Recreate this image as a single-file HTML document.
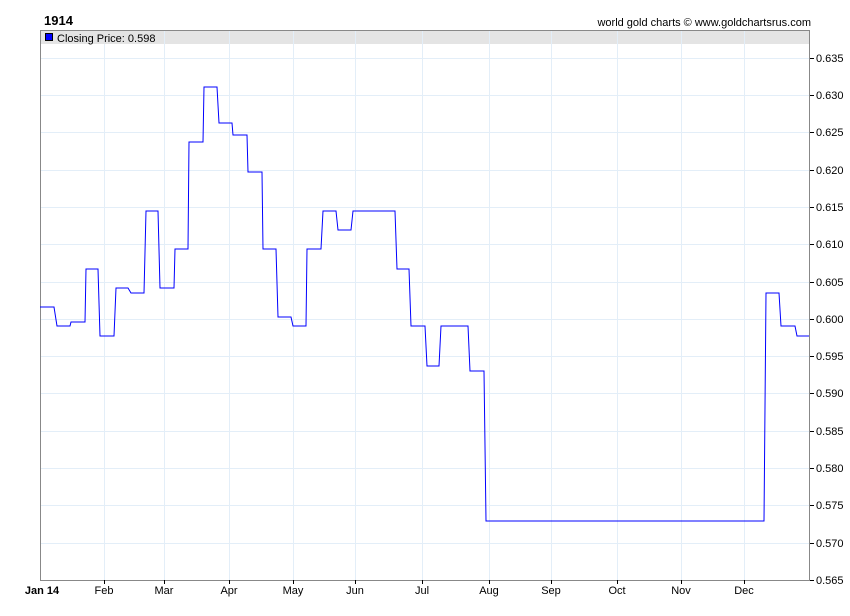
<!DOCTYPE html><html><head><style>body{margin:0;background:#fff}svg{display:block;font-family:"Liberation Sans",sans-serif}</style></head><body>
<svg width="850" height="616" xmlns="http://www.w3.org/2000/svg">
<rect x="40" y="30" width="770" height="14" fill="#e4e4e4"/>
<g stroke="#e3eef8" stroke-width="1">
<line x1="104.5" y1="44" x2="104.5" y2="580"/><line x1="164.5" y1="30" x2="164.5" y2="580"/><line x1="229.5" y1="30" x2="229.5" y2="580"/><line x1="293.5" y1="30" x2="293.5" y2="580"/><line x1="355.5" y1="30" x2="355.5" y2="580"/><line x1="422.5" y1="30" x2="422.5" y2="580"/><line x1="489.5" y1="30" x2="489.5" y2="580"/><line x1="551.5" y1="30" x2="551.5" y2="580"/><line x1="617.5" y1="30" x2="617.5" y2="580"/><line x1="681.5" y1="30" x2="681.5" y2="580"/><line x1="744.5" y1="30" x2="744.5" y2="580"/>
<line x1="40" y1="58.5" x2="810" y2="58.5"/><line x1="40" y1="95.5" x2="810" y2="95.5"/><line x1="40" y1="132.5" x2="810" y2="132.5"/><line x1="40" y1="170.5" x2="810" y2="170.5"/><line x1="40" y1="207.5" x2="810" y2="207.5"/><line x1="40" y1="244.5" x2="810" y2="244.5"/><line x1="40" y1="282.5" x2="810" y2="282.5"/><line x1="40" y1="319.5" x2="810" y2="319.5"/><line x1="40" y1="356.5" x2="810" y2="356.5"/><line x1="40" y1="393.5" x2="810" y2="393.5"/><line x1="40" y1="431.5" x2="810" y2="431.5"/><line x1="40" y1="468.5" x2="810" y2="468.5"/><line x1="40" y1="505.5" x2="810" y2="505.5"/><line x1="40" y1="543.5" x2="810" y2="543.5"/>
</g>
<rect x="40.5" y="30.5" width="769" height="550" fill="none" stroke="#888"/>
<polyline fill="none" stroke="#0000ff" stroke-width="1" points="40,307 54,307 57,326 70,326 71,322 85,322 86,269 98,269 100,336 114,336 116,288 128,288 131,293 144,293 146,211 158,211 160,288 174,288 175,249 188,249 189,142 203,142 204,87 217,87 219,123 232,123 233,135 247,135 248,172 262,172 263,249 276,249 278,317 291,317 293,326 306,326 307,249 321,249 323,211 336,211 338,230 351,230 353,211 395,211 397,269 409,269 411,326 425,326 427,366 439,366 441,326 468,326 470,371 484,371 486,521 764,521 766,293 779,293 781,326 795,326 797,336 809,336"/>
<rect x="45.5" y="33.5" width="7" height="7" fill="#0000ff" stroke="#000"/>
<text x="57" y="42" font-size="11">Closing Price: 0.598</text>
<text x="44" y="25" font-size="13" font-weight="bold">1914</text>
<text x="811" y="26" font-size="11" text-anchor="end">world gold charts © www.goldchartsrus.com</text>
<g stroke="#000"><line x1="810" y1="58.5" x2="814" y2="58.5"/><line x1="810" y1="95.5" x2="814" y2="95.5"/><line x1="810" y1="132.5" x2="814" y2="132.5"/><line x1="810" y1="170.5" x2="814" y2="170.5"/><line x1="810" y1="207.5" x2="814" y2="207.5"/><line x1="810" y1="244.5" x2="814" y2="244.5"/><line x1="810" y1="282.5" x2="814" y2="282.5"/><line x1="810" y1="319.5" x2="814" y2="319.5"/><line x1="810" y1="356.5" x2="814" y2="356.5"/><line x1="810" y1="393.5" x2="814" y2="393.5"/><line x1="810" y1="431.5" x2="814" y2="431.5"/><line x1="810" y1="468.5" x2="814" y2="468.5"/><line x1="810" y1="505.5" x2="814" y2="505.5"/><line x1="810" y1="543.5" x2="814" y2="543.5"/><line x1="810" y1="580.5" x2="814" y2="580.5"/>
<line x1="104.5" y1="580" x2="104.5" y2="584"/><line x1="164.5" y1="580" x2="164.5" y2="584"/><line x1="229.5" y1="580" x2="229.5" y2="584"/><line x1="293.5" y1="580" x2="293.5" y2="584"/><line x1="355.5" y1="580" x2="355.5" y2="584"/><line x1="422.5" y1="580" x2="422.5" y2="584"/><line x1="489.5" y1="580" x2="489.5" y2="584"/><line x1="551.5" y1="580" x2="551.5" y2="584"/><line x1="617.5" y1="580" x2="617.5" y2="584"/><line x1="681.5" y1="580" x2="681.5" y2="584"/><line x1="744.5" y1="580" x2="744.5" y2="584"/></g>
<g font-size="11">
<text x="816" y="62">0.635</text><text x="816" y="99">0.630</text><text x="816" y="136">0.625</text><text x="816" y="174">0.620</text><text x="816" y="211">0.615</text><text x="816" y="248">0.610</text><text x="816" y="286">0.605</text><text x="816" y="323">0.600</text><text x="816" y="360">0.595</text><text x="816" y="397">0.590</text><text x="816" y="435">0.585</text><text x="816" y="472">0.580</text><text x="816" y="509">0.575</text><text x="816" y="547">0.570</text><text x="816" y="584">0.565</text>
</g>
<g font-size="11" text-anchor="middle">
<text x="42" y="594" font-weight="bold">Jan 14</text><text x="104" y="594">Feb</text><text x="164" y="594">Mar</text><text x="229" y="594">Apr</text><text x="293" y="594">May</text><text x="355" y="594">Jun</text><text x="422" y="594">Jul</text><text x="489" y="594">Aug</text><text x="551" y="594">Sep</text><text x="617" y="594">Oct</text><text x="681" y="594">Nov</text><text x="744" y="594">Dec</text>
</g>
</svg></body></html>
